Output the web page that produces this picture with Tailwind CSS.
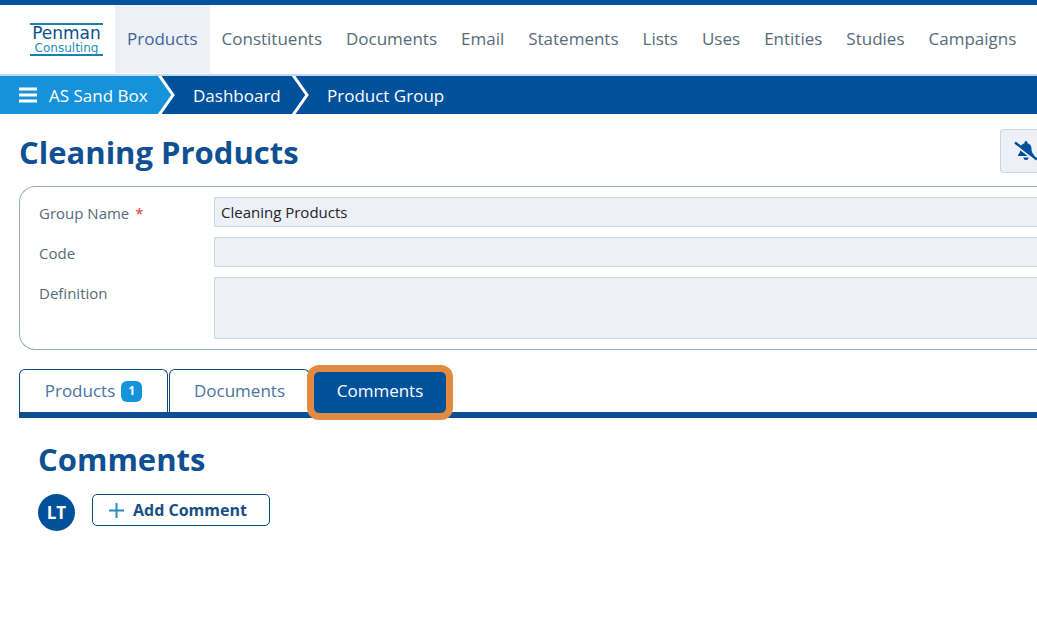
<!DOCTYPE html>
<html lang="en">
<head>
<meta charset="utf-8">
<title>Cleaning Products</title>
<script src="https://cdn.jsdelivr.net/npm/@tailwindcss/browser@4"></script>
</head>
<body class="overflow-x-hidden bg-white font-['Open_Sans','Noto_Sans',sans-serif] text-[#566b78]">
<header class="flex h-[76px] items-stretch overflow-hidden border-t-5 border-b-2 border-t-[#00519c] border-b-[#c3dcee] pl-[30px]">
  <a href="#" class="mt-[18px] mr-3 flex h-[33px] w-[73px] shrink-0 flex-col items-center justify-center border-y-2 border-y-[#1b7fa8] font-['DejaVu_Sans',sans-serif]">
    <span class="text-[17px] leading-[17px] text-[#0c4f88]">Penman</span>
    <span class="text-[12px] leading-3 text-[#2390bd]">Consulting</span>
  </a>
  <nav class="flex pb-px text-[17px] whitespace-nowrap">
    <a href="#" class="flex items-center bg-[#edf0f7] px-3 text-[#3d6597]">Products</a>
    <a href="#" class="flex items-center px-3">Constituents</a>
    <a href="#" class="flex items-center px-3">Documents</a>
    <a href="#" class="flex items-center px-3">Email</a>
    <a href="#" class="flex items-center px-3">Statements</a>
    <a href="#" class="flex items-center px-3">Lists</a>
    <a href="#" class="flex items-center px-3">Uses</a>
    <a href="#" class="flex items-center px-3">Entities</a>
    <a href="#" class="flex items-center px-3">Studies</a>
    <a href="#" class="flex items-center px-3">Campaigns</a>
  </nav>
</header>
<nav class="flex h-[38px] items-center bg-[#00519c] text-[17px] leading-6 text-white" aria-label="Breadcrumb">
  <a href="#" class="flex h-full items-center gap-3 bg-[#1592d9] pl-[19px]">
    <svg class="h-4 w-[18px]" viewBox="0 0 18 16" fill="none" stroke="#fff" stroke-width="3"><path d="M0 2h18M0 8h18M0 14h18"/></svg>
    <span class="w-[109px] pt-[2px]">AS Sand Box</span>
  </a>
  <svg class="h-[38px] w-[18px]" viewBox="0 0 18 38"><path fill="#1592d9" d="M0 0h1l13 19L1 38H0z"/><path fill="none" stroke="#fff" stroke-width="3" d="M1 -1l14 20L1 39"/></svg>
  <a href="#" class="w-[116px] pt-[2px] pl-[17px]">Dashboard</a>
  <svg class="h-[38px] w-[18px]" viewBox="0 0 18 38"><path fill="none" stroke="#fff" stroke-width="3" d="M1 -1l14 20L1 39"/></svg>
  <a href="#" class="pt-[2px] pl-[17px]">Product Group</a>
</nav>
<main class="pl-[19px]">
  <div class="flex h-[72px] items-start justify-between pt-[15px]">
    <h1 class="text-[31px] leading-[46px] font-bold text-[#0f4f93]">Cleaning Products</h1>
    <button aria-label="Mute notifications" class="flex h-11 w-[37px] items-center justify-end overflow-hidden rounded-l border border-r-0 border-[#cbd5e1] bg-[#edf0f7]">
      <svg class="h-5 w-[23px] shrink-0" viewBox="0 0 23 20"><path fill="#00519c" d="M12 0a1.500 1.500 0 0 1 1.500 1.500v.7c2.500.6 4 2.600 4 5.300 0 3 .8 4.500 2.500 6.500v1H4v-1c1.700-2 2.500-3.500 2.500-6.500 0-2.700 1.500-4.700 4-5.300v-.7A1.500 1.500 0 0 1 12 0zM9.500 16.500h5a2.500 2.500 0 0 1-5 0z"/><path stroke="#edf0f7" stroke-width="2" d="M3 5.500l18 14"/><path stroke="#00519c" stroke-width="2.500" d="M1 1.500l22 17"/></svg>
    </button>
  </div>
  <form class="grid grid-cols-[175px_1fr] items-start gap-y-[10px] rounded-l-2xl border border-r-0 border-[#9aabbb] py-[10px] pl-[19px] text-[15px]">
    <label for="name" class="pt-[6px] leading-5">Group Name <span class="ml-[2px] text-[#d9363e]">*</span></label>
    <input id="name" value="Cleaning Products" class="h-[30px] w-full rounded-l-xs border border-r-0 border-[#cbd3e0] bg-[#edf0f7] px-[6px] text-[#1f2529]">
    <label for="code" class="pt-[6px] leading-5">Code</label>
    <input id="code" class="h-[30px] w-full rounded-l-xs border border-r-0 border-[#cbd3e0] bg-[#edf0f7] px-[6px]">
    <label for="definition" class="pt-[6px] leading-5">Definition</label>
    <textarea id="definition" class="block h-[62px] w-full resize-none rounded-l-xs border border-r-0 border-[#cbd3e0] bg-[#edf0f7] px-[6px]"></textarea>
  </form>
  <div role="tablist" class="mt-[19px] flex h-[49px] gap-px border-b-6 border-[#0b4f96] text-[17px] text-[#4d73a0]">
    <button role="tab" class="flex w-[149px] items-center justify-center gap-[6px] rounded-t-md border border-b-0 border-[#0f4a80]">Products <span class="flex h-[21px] w-[21px] items-center justify-center rounded-md bg-[#1592d9] text-[12px] font-bold text-white">1</span></button>
    <button role="tab" class="w-[141px] rounded-t-md border border-b-0 border-[#0f4a80]">Documents</button>
    <button role="tab" aria-selected="true" class="relative -mt-1 -mb-2 -ml-1 h-[55px] w-[146px] rounded-xl border-7 border-[#e18b42] bg-[#00519c] pb-[3px] text-white">Comments</button>
  </div>
  <section class="pt-[18px] pl-[19px]">
    <h2 class="text-[31px] leading-[46px] font-bold text-[#0f4f93]">Comments</h2>
    <div class="mt-3 flex gap-[17px]">
      <span class="flex size-[37px] items-center justify-center rounded-full bg-[#00519c] text-[17px] font-bold text-white">LT</span>
      <button class="flex h-8 w-[178px] items-center gap-[9px] rounded-[5px] border border-[#0f4a80] pl-4 text-[16px] font-bold text-[#174f85]">
        <svg class="size-[15px]" viewBox="0 0 15 15" stroke="#2a8bc2" stroke-width="2"><path d="M7.500 0v15M0 7.500h15"/></svg>Add Comment</button>
    </div>
  </section>
</main>
</body>
</html>
